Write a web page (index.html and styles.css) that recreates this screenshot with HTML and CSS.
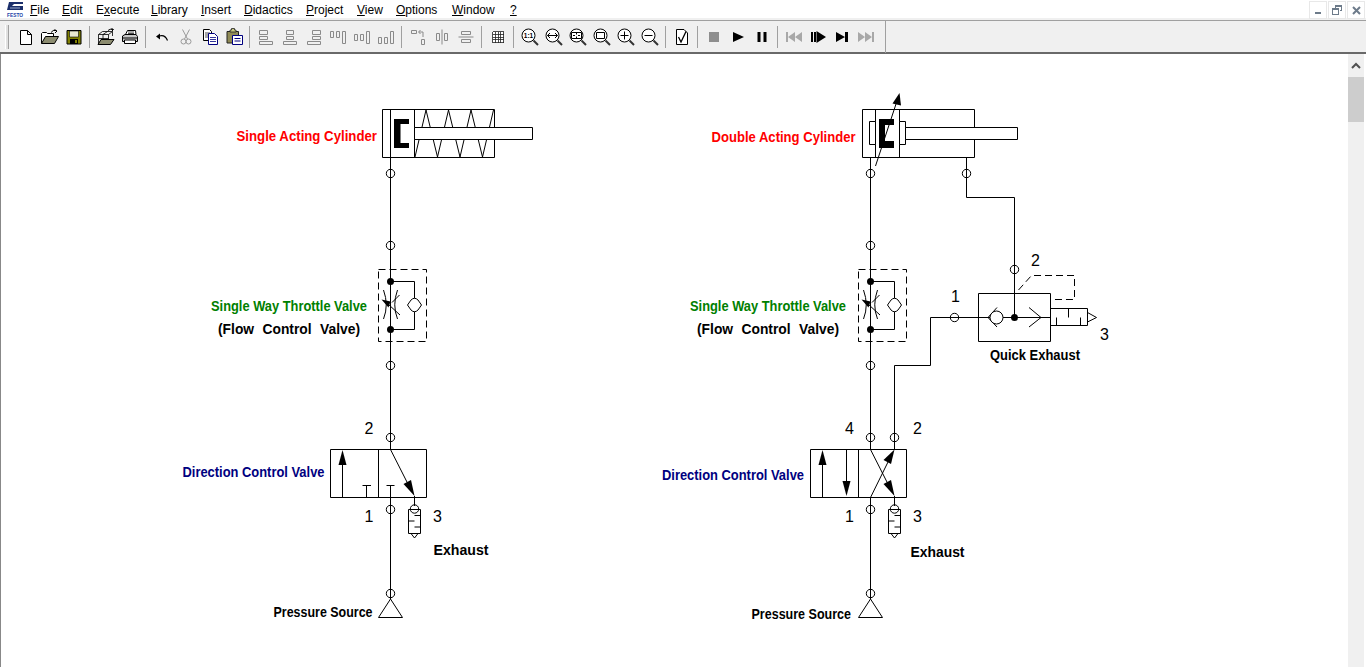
FILE: index.html
```html
<!DOCTYPE html>
<html>
<head>
	<title>FluidSIM Pneumatics</title>
	<link rel="stylesheet" href="styles.css">
</head>
<body>
<div class="app">

	<div class="menubar">
		<svg class="logo" width="24" height="17" viewBox="0 0 24 17">
			<path d="M3 1H17V3H8L6 5H17V9H1L2 5Z" fill="#1b2f6b"/>
			<path d="M4 7H14" stroke="#9fb0d0" fill="none"/>
			<text class="logo-text" x="1" y="16" textLength="16" lengthAdjust="spacingAndGlyphs">FESTO</text>
		</svg>
		<nav class="menu">
			<span><u>F</u>ile</span>
			<span><u>E</u>dit</span>
			<span>E<u>x</u>ecute</span>
			<span><u>L</u>ibrary</span>
			<span><u>I</u>nsert</span>
			<span><u>D</u>idactics</span>
			<span><u>P</u>roject</span>
			<span><u>V</u>iew</span>
			<span><u>O</u>ptions</span>
			<span><u>W</u>indow</span>
			<span><u>?</u></span>
		</nav>
		<div class="winbtns">
			<span class="winbtn"><svg width="8" height="8" viewBox="0 0 8 8"><path d="M1 6H7V8H1Z" fill="#6d7b8a"/></svg></span>
			<span class="winbtn"><svg width="10" height="10" viewBox="0 0 10 10"><path d="M3.5 2.5V.5H9.5V5.5H7.5M.5 3.5H6.5V9.5H.5ZM.5 4.5H6.5M3.5 1.5H9.5" fill="none" stroke="#6d7b8a" stroke-width="1" shape-rendering="crispEdges"/></svg></span>
			<span class="winbtn"><svg width="9" height="9" viewBox="0 0 9 9"><path d="M1 1L8 8M8 1L1 8" fill="none" stroke="#6d7b8a" stroke-width="2"/></svg></span>
		</div>
	</div>

	<div class="toolbar">
		<span class="grip"></span>

		<span class="tb"><svg width="16" height="16" viewBox="0 0 16 16"><path d="M2.5 1.5H9.5L13.5 5.5V15.500H2.5ZM9.5 1.5V5.5H13.5" fill="#fff" stroke="#000"/></svg></span>
		<span class="tb"><svg width="18" height="16" viewBox="0 0 18 16"><path d="M.5 14.5V4.5L1.5 3.5H5.5L6.5 4.5H12.5V7.5" fill="#fff" stroke="#000"/><path d="M.5 14.5L4.5 7.5H17.5L13.5 14.5Z" fill="#8c8c70" stroke="#000"/><path d="M10 3.5Q12 .5 15 1.5M13.5 .5L16 2L14 4" fill="none" stroke="#000"/></svg></span>
		<span class="tb"><svg width="16" height="16" viewBox="0 0 16 16"><path d="M1 1.5H15V15H1Z" fill="#808000" stroke="#000"/><path d="M3.5 2H12.5V8H3.5Z" fill="#e8e8d0" stroke="#000" stroke-width=".6"/><path d="M4 10H12V15H4Z" fill="#000"/><path d="M9 11H11V14H9Z" fill="#808000"/></svg></span>
		<span class="sep"></span>

		<span class="tb"><svg width="18" height="18" viewBox="0 0 18 18"><path d="M5.500 3.500H15.500M1.500 6.500H11.500M1.500 10.500H11.500M5.500 3.500L1.500 6.500M10.500 3.500L6 6.500M15.500 3.500L11.500 6.500M1.500 6.500V16.500M6 6.500V14M11.500 6.500V14M15.500 3.500V8" fill="none" stroke="#000" stroke-width=".8"/><path d="M1 16.500L4 11.500H17L13.500 16.500Z" fill="#8c8c70" stroke="#000"/><path d="M11 2.500Q13 .5 16 1.500M14.500 .5L16.500 1.500L15 3" fill="none" stroke="#000"/></svg></span>
		<span class="tb"><svg width="18" height="16" viewBox="0 0 18 16"><path d="M4.500 5.500L6.500 1.500H14.500L15 5.500" fill="#fff" stroke="#000"/><path d="M7 3H13M7 4.500H13" stroke="#000" stroke-width=".7"/><path d="M1.500 7L4 5.500H15L16.500 7.500V12.500H1.500Z" fill="#c8c8c8" stroke="#000"/><path d="M2 9H16" stroke="#000"/><path d="M3.500 11H14.500V14.500H3.500Z" fill="#fff" stroke="#000"/></svg></span>
		<span class="sep"></span>

		<span class="tb"><svg width="14" height="10" viewBox="0 0 14 10"><path d="M1 4.500L5 1.500V7.500Z" fill="#000"/><path d="M4 4Q10 2 12.500 8.500" fill="none" stroke="#000" stroke-width="1.200"/></svg></span>
		<span class="tb"><svg width="12" height="16" viewBox="0 0 12 16"><path d="M2.500 .5L7.500 10M9.500 .5L4.500 10" fill="none" stroke="#9a9a9a"/><circle cx="3.500" cy="12.500" r="2.500" fill="none" stroke="#9a9a9a"/><circle cx="8.500" cy="12.500" r="2.500" fill="none" stroke="#9a9a9a"/></svg></span>
		<span class="tb"><svg width="16" height="16" viewBox="0 0 16 16"><path d="M1.500 .5H7.500L9.500 2.500V11.500H1.500Z" fill="#fff" stroke="#000"/><path d="M3 4H8M3 6H8M3 8H8" stroke="#000" stroke-width=".7"/><path d="M6.500 4.500H12.500L15.500 7.500V15.500H6.500Z" fill="#fff" stroke="#000080"/><path d="M8 8.500H14M8 10.500H14M8 12.500H14" stroke="#000080" stroke-width=".8"/></svg></span>
		<span class="tb"><svg width="17" height="17" viewBox="0 0 17 17"><path d="M1 3.500H12.500V15H1Z" fill="#8f8a55" stroke="#222"/><path d="M4 4H10V2H8.500V.5H5.500V2H4Z" fill="#c8c880" stroke="#222" stroke-width=".8"/><path d="M6.500 7.500H16.500V16.500H6.500Z" fill="#fff" stroke="#000080"/><path d="M8.500 10.500H14.500M8.500 13H14.500" stroke="#000080"/></svg></span>
		<span class="sep"></span>

		<span class="tb"><svg class="grey" width="16" height="16" viewBox="0 0 16 16"><path d="M1.500 1.500H9.500V5.500H1.500ZM1.500 7.500H9.500V10.500H1.500ZM1.500 12.500H14.500V15.500H1.500Z"/></svg></span>
		<span class="tb"><svg class="grey" width="16" height="16" viewBox="0 0 16 16"><path d="M4.500 1.500H11.500V5.500H4.500ZM4.500 7.500H11.500V10.500H4.500ZM1.500 12.500H14.500V15.500H1.500Z"/></svg></span>
		<span class="tb"><svg class="grey" width="16" height="16" viewBox="0 0 16 16"><path d="M6.500 1.500H14.500V5.500H6.500ZM6.500 7.500H14.500V10.500H6.500ZM1.500 12.500H14.500V15.500H1.500Z"/></svg></span>
		<span class="tb"><svg class="grey" width="16" height="16" viewBox="0 0 16 16"><path d="M.5 2.500H3.500V8.500H.5ZM6.500 2.500H9.500V8.500H6.500ZM12.500 2.500H15.500V14.500H12.500Z"/></svg></span>
		<span class="tb"><svg class="grey" width="16" height="16" viewBox="0 0 16 16"><path d="M.5 5.500H3.500V11.500H.5ZM6.500 5.500H9.500V11.500H6.500ZM12.500 2.500H15.500V14.500H12.500Z"/></svg></span>
		<span class="tb"><svg class="grey" width="16" height="16" viewBox="0 0 16 16"><path d="M.5 8.500H3.500V14.500H.5ZM6.500 8.500H9.500V14.500H6.500ZM12.500 2.500H15.500V14.500H12.500Z"/></svg></span>
		<span class="sep"></span>

		<span class="tb"><svg class="grey" width="16" height="16" viewBox="0 0 16 16"><path d="M1.500 1.500H6.500V4.500H1.500ZM11.500 10.500H14.500V15.500H11.500ZM13 8V3H9M10.500 1L8.500 3L10.500 5"/></svg></span>
		<span class="tb"><svg class="grey" width="16" height="16" viewBox="0 0 16 16"><path d="M2.500 4.500H5.500V11.500H2.500ZM10.500 4.500H13.500V11.500H10.500ZM8 .5V15.500"/></svg></span>
		<span class="tb"><svg class="grey" width="16" height="16" viewBox="0 0 16 16"><path d="M3.500 2.500H12.500V5.500H3.500ZM3.500 10.500H12.500V13.500H3.500ZM.5 8H15.500"/></svg></span>
		<span class="sep"></span>

		<span class="tb"><svg width="14" height="14" viewBox="0 0 14 14"><path d="M1.500 1.500H12.500V12.500H1.500ZM1.500 4.500H12.500M1.500 7H12.500M1.500 9.500H12.500M4.500 1.500V12.500M7 1.500V12.500M9.500 1.500V12.500" fill="#fff" stroke="#222" stroke-width=".8" shape-rendering="crispEdges"/></svg></span>
		<span class="sep"></span>

		<span class="tb"><svg width="20" height="20" viewBox="0 0 20 20"><circle class="lens" cx="8.500" cy="8.500" r="6.500"/><path class="handle" d="M13.500 13.500L18 18"/><text class="lens-text" x="8.500" y="11" text-anchor="middle">1:1</text></svg></span>
		<span class="tb"><svg width="20" height="20" viewBox="0 0 20 20"><circle class="lens" cx="8.500" cy="8.500" r="6.500"/><path class="handle" d="M13.500 13.500L18 18"/><path class="glyph" d="M3.500 8.500H13.500M6 6L3.500 8.500L6 11M11 6L13.500 8.500L11 11"/></svg></span>
		<span class="tb"><svg width="20" height="20" viewBox="0 0 20 20"><circle class="lens" cx="8.500" cy="8.500" r="6.500"/><path class="handle" d="M13.500 13.500L18 18"/><path class="glyph" d="M3.500 5.500H13.500V11.500H3.500ZM8.500 6V7.500M8.500 9.500V11M5 8.500H7M10 8.500H12"/></svg></span>
		<span class="tb"><svg width="20" height="20" viewBox="0 0 20 20"><circle class="lens" cx="8.500" cy="8.500" r="6.500"/><path class="handle" d="M13.500 13.500L18 18"/><path class="glyph" d="M4.500 5.500H12.500V11.500H4.500Z"/></svg></span>
		<span class="tb"><svg width="20" height="20" viewBox="0 0 20 20"><circle class="lens" cx="8.500" cy="8.500" r="6.500"/><path class="handle" d="M13.500 13.500L18 18"/><path class="glyph" d="M4.500 8.500H12.500M8.500 4.500V12.500"/></svg></span>
		<span class="tb"><svg width="20" height="20" viewBox="0 0 20 20"><circle class="lens" cx="8.500" cy="8.500" r="6.500"/><path class="handle" d="M13.500 13.500L18 18"/><path class="glyph" d="M4.500 8.500H12.500"/></svg></span>
		<span class="sep"></span>

		<span class="tb"><svg width="14" height="16" viewBox="0 0 14 16"><path d="M1.500 .5H9L12.500 4V15.500H1.500Z" fill="#fff" stroke="#000"/><path d="M3.500 8L6 13L11 2.500" fill="none" stroke="#000" stroke-width="1.300"/></svg></span>
		<span class="sep"></span>

		<span class="tb"><svg width="12" height="12" viewBox="0 0 12 12"><path d="M1 1H11V11H1Z" fill="#8e8e8e"/></svg></span>
		<span class="tb"><svg width="12" height="12" viewBox="0 0 12 12"><path d="M1 1L12 6L1 11Z" fill="#000"/></svg></span>
		<span class="tb"><svg width="12" height="12" viewBox="0 0 12 12"><path d="M1.500 1H4.500V11H1.500ZM7.500 1H10.500V11H7.500Z" fill="#000"/></svg></span>
		<span class="sep"></span>

		<span class="tb"><svg width="18" height="12" viewBox="0 0 18 12"><path d="M1 1H3V11H1ZM10 1V11L3 6ZM17 1V11L10 6Z" fill="#a8a8a8"/></svg></span>
		<span class="tb"><svg width="16" height="12" viewBox="0 0 16 12"><path d="M1 1H3V11H1ZM4 1H6V11H4ZM6.500 0L16 6L6.500 12Z" fill="#000"/></svg></span>
		<span class="tb"><svg width="14" height="12" viewBox="0 0 14 12"><path d="M1 1L10 6L1 11ZM10 1H13V11H10Z" fill="#000"/></svg></span>
		<span class="tb"><svg width="18" height="12" viewBox="0 0 18 12"><path d="M1 1L8 6L1 11ZM8 1L15 6L8 11ZM15 1H17V11H15Z" fill="#a8a8a8"/></svg></span>
		<span class="end"></span>
	</div>

	<div class="workspace">
		<div class="sheet">
			<svg class="circuit" width="1347" height="613" viewBox="1 54 1347 613">
				<defs>
					<circle id="port" r="4.200" class="line"/>
					<g id="throttle">
						<path class="dash" d="M378.500 269.500H426.500V341.500H378.500Z"/>
						<path class="line" d="M390.500 281.500H414.500V329.500H390.500"/>
						<circle class="dot" cx="390.500" cy="281.500" r="3.500"/>
						<circle class="dot" cx="390.500" cy="329.500" r="3.500"/>
						<path class="white" d="M407.500 305L411 300Q414.500 296.500 418 300L421.500 305L418 310Q414.500 313.500 411 310Z"/>
						<path class="line" d="M383.500 290Q389 305 383.500 319M397.500 290Q392 305 397.500 319M399.500 295L392 302.500M400 315L388 304"/>
						<path class="dot" d="M381.500 299.500L390.500 301.500L388.500 307.500Z"/>
					</g>
					<g id="silencer">
						<path class="line" d="M408.500 509.500H420.500V533.500H408.500ZM414.500 515.500H420.500M408.500 521H414.500M414.500 527H420.500M411 533.500L414.500 538L418 533.500"/>
						<use href="#port" x="414.500" y="509"/>
					</g>
					<path id="source" class="white" d="M390.500 599L378.500 617.500H402.500Z"/>
				</defs>

				<!-- left circuit -->
				<path class="line" d="M390.500 157V449.500M390.500 497V599"/>
				<use href="#port" x="390.500" y="173.500"/>
				<use href="#port" x="390.500" y="245.500"/>
				<use href="#port" x="390.500" y="365.500"/>
				<use href="#port" x="390.500" y="437.500"/>
				<use href="#port" x="390.500" y="509.500"/>
				<use href="#port" x="390.500" y="593.500"/>

				<path class="line" d="M382.500 109.500H494.500V157.500H382.500ZM390.500 109.500V157.500M414.500 109.500V157.500"/>
				<path class="line" d="M415 157L426 110L437.500 157L448.500 110L460 157L471 110L482.500 157L493.500 110"/>
				<path class="white" d="M414.500 127.500H532.500V139.500H414.500Z"/>
				<path class="dot" d="M394 119H409V124H400.500V143H409V148H394Z"/>

				<use href="#throttle"/>

				<path class="white" d="M330.500 449.500H426.500V497.500H330.500Z"/>
				<path class="line" d="M378.500 449.500V497.500M342.500 497V462M366.500 497V485.500M362.500 485.500H371M390.500 497V485.500M386.500 485.500H394.500M390.500 449.500L410 488M414.500 496V506"/>
				<path class="dot" d="M342.500 450L338.500 465H346.500Z"/>
				<path class="dot" d="M414.500 496L403.500 484L411 480Z"/>
				<use href="#silencer"/>
				<use href="#source"/>

				<text class="label red" x="236.500" y="141" textLength="140.500" lengthAdjust="spacingAndGlyphs">Single Acting Cylinder</text>
				<text class="label green" x="211" y="311" textLength="156" lengthAdjust="spacingAndGlyphs">Single Way Throttle Valve</text>
				<text class="label wide" x="218" y="334" textLength="142" lengthAdjust="spacingAndGlyphs">(Flow Control Valve)</text>
				<text class="label navy" x="182.500" y="477" textLength="142" lengthAdjust="spacingAndGlyphs">Direction Control Valve</text>
				<text class="label" x="433.500" y="555" textLength="55" lengthAdjust="spacingAndGlyphs">Exhaust</text>
				<text class="label" x="273.500" y="617" textLength="99" lengthAdjust="spacingAndGlyphs">Pressure Source</text>
				<text class="num" x="364.500" y="434">2</text>
				<text class="num" x="364.500" y="522">1</text>
				<text class="num" x="433" y="522">3</text>

				<!-- right circuit -->
				<path class="line" d="M870.500 157V449.500M870.500 497V599M894.500 449.500V365.500H930.500V317.500H978.500M966.500 157V197.500H1014.500V317"/>
				<use href="#port" x="870.500" y="173.500"/>
				<use href="#port" x="870.500" y="245.500"/>
				<use href="#port" x="870.500" y="365.500"/>
				<use href="#port" x="870.500" y="437.500"/>
				<use href="#port" x="870.500" y="509.500"/>
				<use href="#port" x="870.500" y="593.500"/>
				<use href="#port" x="894.500" y="437.500"/>
				<use href="#port" x="966.500" y="173.500"/>
				<use href="#port" x="1014.500" y="269.500"/>
				<use href="#port" x="954.500" y="317.500"/>

				<path class="white" d="M862.500 109.500H974.500V157.500H862.500Z"/>
				<path class="line" d="M875.500 109.500V157.500M899.500 109.500V157.500"/>
				<path class="white" d="M869.500 121.500H875.500V144.500H869.500ZM899.500 121.500H905.500V144.500H899.500Z"/>
				<path class="white" d="M905.500 127.500H1017.500V139.500H905.500Z"/>
				<path class="dot" d="M879 119H894V125H885V141H894V148H879Z"/>
				<path class="line" d="M875.500 166L896 104"/>
				<path class="dot" d="M899.500 93L892.500 103.500L901 105.500Z"/>

				<use href="#throttle" x="480"/>

				<path class="white" d="M978.500 293.500H1050.500V341.500H978.500Z"/>
				<path class="line" d="M978.500 317.500H1050.500M1014.500 293.500V317.500M1029 307.500L1041 317.500L1029 327M988 317.500L997 307.500M988 317.500L997 327"/>
				<circle class="white" cx="996.500" cy="317.500" r="6.500"/>
				<circle class="dot" cx="1014.500" cy="317.500" r="3.500"/>
				<path class="dash" d="M1018.500 290L1031.500 275.500H1074.500V299.500H1050.500"/>
				<path class="line" d="M1050.500 308.500H1087.500V325.500H1050.500ZM1056.500 317.500V325.500M1068.500 308.500V317.500M1080.500 317.500V325.500M1087.500 312.500L1096.500 317.500L1087.500 322"/>

				<path class="white" d="M810.500 449.500H906.500V497.500H810.500Z"/>
				<path class="line" d="M858.500 449.500V497.500M822.500 497V462M846.500 449.500V484M870.500 449.500L890 488M870.500 497.500L888 462M894.500 496V506"/>
				<path class="dot" d="M822.500 450L818.500 465H826.500Z"/>
				<path class="dot" d="M846.500 496L842.500 481H850.500Z"/>
				<path class="dot" d="M894.500 449.500L883.500 460L891 464Z"/>
				<path class="dot" d="M894.500 496L883.500 484L891 480Z"/>
				<use href="#silencer" x="480"/>
				<use href="#source" x="480"/>

				<text class="label red" x="711.500" y="142" textLength="144" lengthAdjust="spacingAndGlyphs">Double Acting Cylinder</text>
				<text class="label green" x="690" y="311" textLength="156" lengthAdjust="spacingAndGlyphs">Single Way Throttle Valve</text>
				<text class="label wide" x="697" y="334" textLength="142" lengthAdjust="spacingAndGlyphs">(Flow Control Valve)</text>
				<text class="label navy" x="662" y="480" textLength="142" lengthAdjust="spacingAndGlyphs">Direction Control Valve</text>
				<text class="label" x="910.500" y="557" textLength="54" lengthAdjust="spacingAndGlyphs">Exhaust</text>
				<text class="label" x="751.500" y="619" textLength="99.500" lengthAdjust="spacingAndGlyphs">Pressure Source</text>
				<text class="label" x="990" y="359.500" textLength="90" lengthAdjust="spacingAndGlyphs">Quick Exhaust</text>
				<text class="num" x="845" y="434">4</text>
				<text class="num" x="913" y="434">2</text>
				<text class="num" x="845" y="522">1</text>
				<text class="num" x="913" y="522">3</text>
				<text class="num" x="1031" y="266">2</text>
				<text class="num" x="951" y="302">1</text>
				<text class="num" x="1100" y="340">3</text>
			</svg>
		</div>
		<div class="scrollbar">
			<div class="scroll-up"><svg width="10" height="7" viewBox="0 0 10 7"><path d="M1 6L5 2L9 6" fill="none" stroke="#505050" stroke-width="2"/></svg></div>
			<div class="scroll-thumb"></div>
		</div>
	</div>

</div>
</body>
</html>
```

FILE: styles.css
```css
html, body {
    margin: 0;
    padding: 0;
    background: #fff;
    overflow: hidden;
}

.app {
    display: flex;
    flex-direction: column;
    width: 1366px;
    height: 667px;
    font-family: "Liberation Sans", Arial, sans-serif;
    color: #000;
}

/* menu */
.menubar {
    display: flex;
    align-items: flex-start;
    height: 20px;
    flex: none;
    background: #fff;
    box-sizing: border-box;
    border-bottom: 2px solid #f0f0f0;
}

.logo {
    margin: 1px 0 0 6px;
    flex: none;
}

.logo-text {
    font-size: 6px;
    font-weight: bold;
    fill: #1c3fa8;
}

.menu {
    display: grid;
    grid-template-columns: 32px 34px 55px 50px 43px 62px 51px 39px 56px 58px auto;
    font-size: 12px;
    line-height: 18px;
}

.menu span {
    padding-top: 1px;
}

.winbtns {
    display: flex;
    gap: 1px;
    margin: 1px 1px 0 auto;
}

.winbtn {
    display: flex;
    align-items: center;
    justify-content: center;
    width: 16px;
    height: 16px;
    border: 1px solid #e8e8e8;
    background: #fff;
}

/* toolbar */
.toolbar {
    display: flex;
    align-items: center;
    flex: none;
    height: 34px;
    box-sizing: border-box;
    background: #f0f0f0;
    border-top: 1px solid #a0a0a0;
    border-bottom: 2px solid #696969;
}

.grip {
    flex: none;
    width: 2px;
    height: 24px;
    margin: 0 5px 0 5px;
    border-left: 1px solid #fff;
    border-right: 1px solid #a0a0a0;
    background: #e0e0e0;
}

.tb {
    flex: none;
    display: flex;
    align-items: center;
    justify-content: center;
    width: 24px;
    height: 24px;
}

.sep {
    flex: none;
    width: 1px;
    height: 22px;
    margin: 0 4px 0 3px;
    background: #a0a0a0;
}

.end {
    flex: none;
    width: 1px;
    height: 32px;
    margin-left: 7px;
    background: #a0a0a0;
}

.grey path {
    fill: none;
    stroke: #8a8a8a;
}

.lens {
    fill: #fff;
    stroke: #000;
}

.handle {
    fill: none;
    stroke: #333;
    stroke-width: 2;
}

.glyph {
    fill: none;
    stroke: #000;
}

.lens-text {
    font-size: 6.500px;
    font-weight: bold;
}

/* sheet and scrollbar */
.workspace {
    flex: 1;
    display: flex;
    min-height: 0;
    border-left: 1px solid #888;
}

.sheet {
    flex: 1;
    min-width: 0;
    overflow: hidden;
    background: #fff;
}

.circuit {
    display: block;
}

.line {
    fill: none;
    stroke: #000;
    stroke-width: 1;
}

.white {
    fill: #fff;
    stroke: #000;
    stroke-width: 1;
}

.dot {
    fill: #000;
}

.dash {
    fill: none;
    stroke: #000;
    stroke-width: 1;
    stroke-dasharray: 7 4;
}

.label {
    font-size: 15px;
    font-weight: bold;
    fill: #000;
}

.wide {
    word-spacing: 5px;
}

.red {
    fill: #f00;
}

.green {
    fill: #008000;
}

.navy {
    fill: #000080;
}

.num {
    font-size: 16px;
    fill: #000;
}

.scrollbar {
    flex: none;
    width: 16px;
    margin-right: 2px;
    background: #f0f0f0;
}

.scroll-up {
    display: flex;
    align-items: center;
    justify-content: center;
    height: 23px;
}

.scroll-thumb {
    height: 45px;
    background: #cdcdcd;
}
```
